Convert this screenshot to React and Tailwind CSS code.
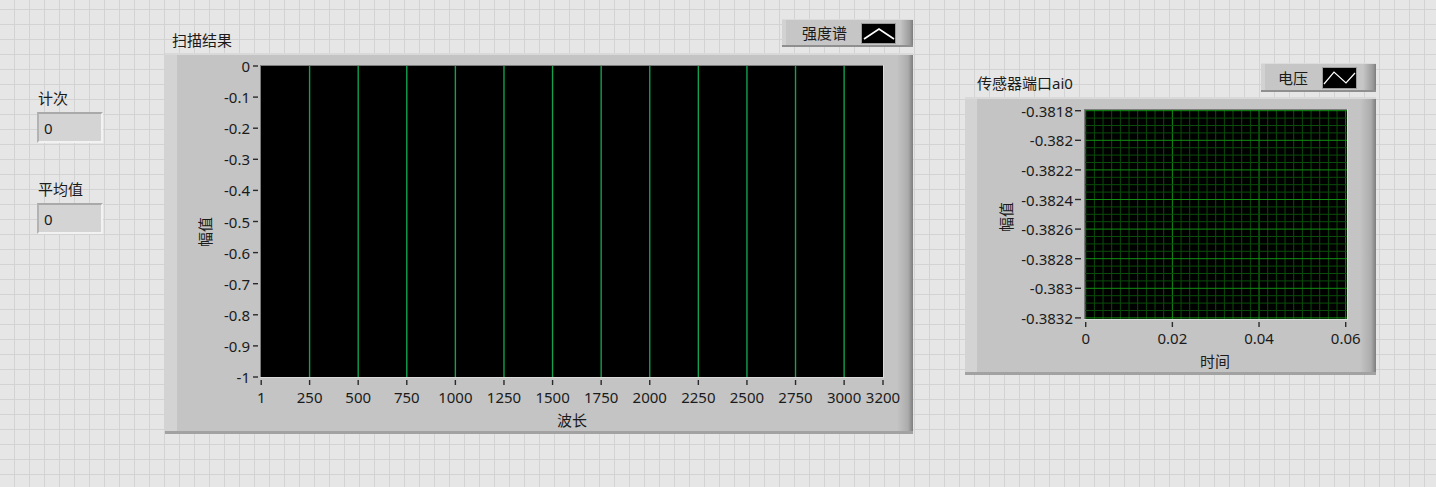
import React from "react";

const FONT = "font-['Noto_Sans','Noto_Sans_CJK_SC',sans-serif]";
const TXT = "#1b1b1b";
const PANEL_BG =
  "bg-[linear-gradient(to_right,#d3d3d3_0px,#d3d3d3_12px,#c4c4c4_12px,#c4c4c4_calc(100%-16px),#acacac_calc(100%-5px),#7d7d7d_100%)] shadow-[inset_0_2px_0_#d9d9d9,inset_0_-3px_0_#a2a2a2]";

function Indicator({ label }) {
  return (
    <div className="flex flex-col">
      <div className="h-[20px] pl-[1px] text-[15px] leading-[20px] text-[#1b1b1b]">{label}</div>
      <div className="mt-[4px] flex h-[31px] w-[66px] items-center border-2 border-t-[#a9a9a9] border-l-[#b3b3b3] border-r-[#f2f2f2] border-b-[#f2f2f2] bg-[#d4d4d4] pl-[5px] text-[15px] leading-[20px] text-[#1b1b1b]">
        0
      </div>
    </div>
  );
}

function Legend({ text, className, children }) {
  return (
    <div
      className={`flex items-center gap-[14px] bg-[linear-gradient(to_right,#d2d2d2_0px,#d2d2d2_4px,#c6c6c6_4px,#c6c6c6_calc(100%-13px),#9a9a9a_calc(100%-3px),#7c7c7c_100%)] shadow-[inset_0_1px_0_#dcdcdc,inset_0_-2px_0_#8f8f8f] ${className}`}
    >
      <span className="text-[15px] leading-[20px] text-[#1b1b1b]">{text}</span>
      {children}
    </div>
  );
}

function MainChart() {
  const xv = (v) => 96.2 + ((v - 1) * 621.8) / 3199;
  const yTicks = ["0", "-0.1", "-0.2", "-0.3", "-0.4", "-0.5", "-0.6", "-0.7", "-0.8", "-0.9", "-1"];
  const greens = [250, 500, 750, 1000, 1250, 1500, 1750, 2000, 2250, 2500, 2750, 3000];
  const xTicks = [1, ...greens, 3200];
  return (
    <svg width="748" height="381" className={`block ${FONT} text-[15px]`}>
      <rect x="95" y="12" width="623" height="312" fill="#000" />
      {greens.map((v) => (
        <line key={v} x1={xv(v)} x2={xv(v)} y1="13" y2="324" stroke="#13a04f" strokeWidth="1.4" />
      ))}
      <line x1="95" x2="718" y1="12.5" y2="12.5" stroke="#7c7c7c" />
      <line x1="95.5" x2="95.5" y1="12" y2="324" stroke="#7c7c7c" />
      <line x1="95" x2="718" y1="324.5" y2="324.5" stroke="#dadada" />
      <line x1="718.5" x2="718.5" y1="12" y2="325" stroke="#dadada" />
      {yTicks.map((t, i) => {
        const y = 13 + i * 31.1;
        return (
          <g key={t}>
            <line x1="88" x2="93" y1={y} y2={y} stroke="#2a2a2a" strokeWidth="1.4" />
            <text x="85" y={y} textAnchor="end" dominantBaseline="central" fill={TXT}>
              {t}
            </text>
          </g>
        );
      })}
      {xTicks.map((v) => {
        const x = xv(v);
        return (
          <g key={v}>
            <line x1={x} x2={x} y1="327" y2="332" stroke="#2a2a2a" strokeWidth="1.4" />
            <text x={x} y="344" textAnchor="middle" dominantBaseline="central" fill={TXT}>
              {v}
            </text>
          </g>
        );
      })}
      <text x="407" y="367" textAnchor="middle" dominantBaseline="central" fill={TXT}>
        波长
      </text>
      <text x="40" y="179" textAnchor="middle" dominantBaseline="central" fill={TXT} transform="rotate(-90 40 179)">
        幅值
      </text>
    </svg>
  );
}

function SensorChart() {
  const px0 = 120.7;
  const dx = 86.67 / 10;
  const py0 = 13.7;
  const dy = 29.6 / 4;
  const yTicks = ["-0.3818", "-0.382", "-0.3822", "-0.3824", "-0.3826", "-0.3828", "-0.383", "-0.3832"];
  const xTicks = ["0", "0.02", "0.04", "0.06"];
  const vLines = Array.from({ length: 31 }, (_, k) => k);
  const hLines = Array.from({ length: 29 }, (_, j) => j);
  return (
    <svg width="411" height="278" className={`block ${FONT} text-[15px]`}>
      <rect x="119" y="12" width="263" height="210" fill="#000" />
      {vLines.map((k) => {
        const x = px0 + k * dx;
        return (
          <line key={"v" + k} x1={x} x2={x} y1="13" y2="222" stroke={k % 10 === 0 ? "#129012" : "#0a4d0a"} strokeWidth="1" />
        );
      })}
      {hLines.map((j) => {
        const y = py0 + j * dy;
        return (
          <line key={"h" + j} x1="120" x2="382" y1={y} y2={y} stroke={j % 4 === 0 ? "#129012" : "#0a4d0a"} strokeWidth="1" />
        );
      })}
      <line x1="119" x2="382" y1="12.5" y2="12.5" stroke="#7c7c7c" />
      <line x1="119.5" x2="119.5" y1="12" y2="222" stroke="#7c7c7c" />
      <line x1="119" x2="382" y1="222.5" y2="222.5" stroke="#dadada" />
      <line x1="382.5" x2="382.5" y1="12" y2="223" stroke="#dadada" />
      {yTicks.map((t, i) => {
        const y = py0 + i * 29.6;
        return (
          <g key={t}>
            <line x1="110" x2="116" y1={y} y2={y} stroke="#2a2a2a" strokeWidth="1.4" />
            <text x="108" y={y} textAnchor="end" dominantBaseline="central" fill={TXT}>
              {t}
            </text>
          </g>
        );
      })}
      {xTicks.map((t, i) => {
        const x = px0 + i * 86.67;
        return (
          <g key={t}>
            <line x1={x} x2={x} y1="225" y2="230" stroke="#2a2a2a" strokeWidth="1.4" />
            <text x={x} y="241" textAnchor="middle" dominantBaseline="central" fill={TXT}>
              {t}
            </text>
          </g>
        );
      })}
      <text x="250" y="264" textAnchor="middle" dominantBaseline="central" fill={TXT}>
        时间
      </text>
      <text x="41" y="120" textAnchor="middle" dominantBaseline="central" fill={TXT} transform="rotate(-90 41 120)">
        幅值
      </text>
    </svg>
  );
}

export default function App() {
  return (
    <div
      className={`flex h-[487px] w-[1436px] items-start overflow-hidden bg-[#e6e6e6] bg-[linear-gradient(to_right,transparent_14px,#d3d3d3_14px),linear-gradient(to_bottom,transparent_14px,#d3d3d3_14px)] bg-[size:15px_15px] bg-[position:0_10px] pl-[37px] ${FONT}`}
    >
      {/* Indicators column */}
      <div className="mt-[88px] flex flex-col gap-[36px]">
        <Indicator label="计次" />
        <Indicator label="平均值" />
      </div>

      {/* 扫描结果 graph */}
      <div className="ml-[62px] mt-[19px] flex w-[748px] flex-col">
        <div className="flex h-[34px] items-start justify-between">
          <div className="mt-[11px] pl-[7px] text-[15px] leading-[20px] text-[#1b1b1b]">扫描结果</div>
          <Legend text="强度谱" className="h-[28px] w-[131px] pl-[20px]">
            <div className="h-[21px] w-[35px] border border-[#9c9c9c] bg-black">
              <svg width="33" height="19" className="block">
                <polyline points="2,15 17,5 32,15" fill="none" stroke="#fff" strokeWidth="1.6" />
              </svg>
            </div>
          </Legend>
        </div>
        <div className={`h-[381px] w-[748px] ${PANEL_BG}`}>
          <MainChart />
        </div>
      </div>

      {/* 传感器端口ai0 graph */}
      <div className="ml-[52px] mt-[63px] flex w-[411px] flex-col">
        <div className="flex h-[34px] items-start justify-between">
          <div className="mt-[10px] pl-[12px] text-[15px] leading-[20px] text-[#1b1b1b]">传感器端口ai0</div>
          <Legend text="电压" className="h-[29px] w-[115px] pl-[17px]">
            <div className="h-[22px] w-[35px] border border-[#9c9c9c] bg-black">
              <svg width="33" height="20" className="block">
                <polyline points="1,16 11,4 23,15 32,5" fill="none" stroke="#fff" strokeWidth="1.2" />
              </svg>
            </div>
          </Legend>
        </div>
        <div className={`h-[278px] w-[411px] ${PANEL_BG}`}>
          <SensorChart />
        </div>
      </div>
    </div>
  );
}
